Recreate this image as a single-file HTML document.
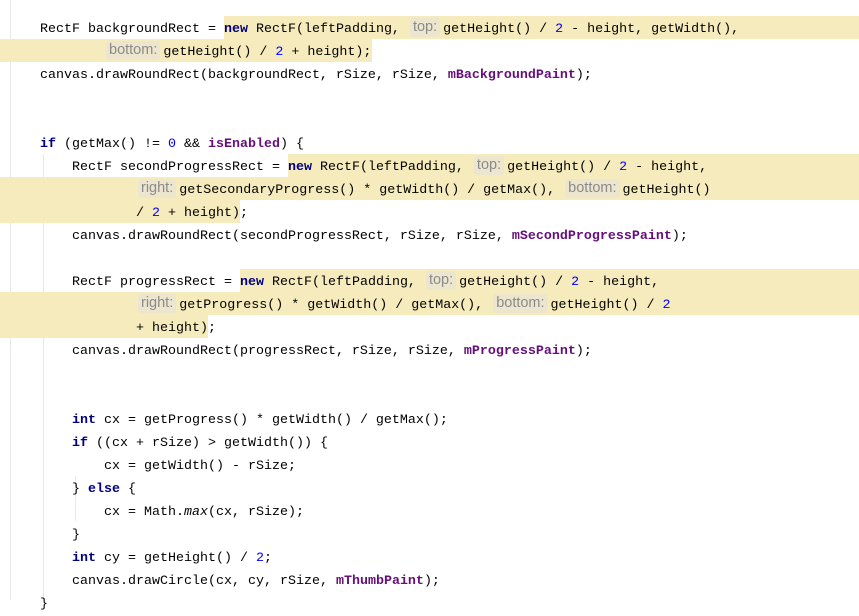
<!DOCTYPE html>
<html><head><meta charset="utf-8"><style>
body{margin:0;width:859px;height:600px;overflow:hidden;background:#fff;position:relative;font-family:"Liberation Mono",monospace;font-size:13.33px;color:#000}
.l{position:absolute;left:0;height:23px;line-height:23px;white-space:pre;transform:translateY(2px)}
.hl{position:absolute;height:23px;background:#f6ebbc}
.k{color:#000080;font-weight:bold}
.n{color:#0000ff}
.f{color:#660e7a;font-weight:bold}
.i{font-style:italic}
.h{display:inline-block;font-family:"Liberation Sans",sans-serif;font-size:14.5px;color:#8a8a8a;background:#ede6cf;border-radius:3px;padding:0 3px;line-height:19px;margin:0 3px 0 2px;position:relative;top:-1px}
.g{position:absolute;width:1px;background:#e8e8e8}
</style></head><body>
<div class="g" style="left:10px;top:0;height:600px"></div>
<div class="hl" style="left:224px;width:635px;top:16px"></div>
<div class="hl" style="left:0;width:372px;top:39px"></div>
<div class="hl" style="left:288px;width:571px;top:154px"></div>
<div class="hl" style="left:0;width:859px;top:177px"></div>
<div class="hl" style="left:0;width:240px;top:200px"></div>
<div class="hl" style="left:240px;width:619px;top:269px"></div>
<div class="hl" style="left:0;width:859px;top:292px"></div>
<div class="hl" style="left:0;width:208px;top:315px"></div>
<div class="g" style="left:43px;top:154px;height:446px"></div>
<div class="g" style="left:75px;top:476px;height:22px"></div>
<div class="g" style="left:75px;top:499px;height:22px"></div>
<div class="g" style="left:43px;top:39px;height:23px"></div>

<div class="l" style="top:16px;left:40px">RectF backgroundRect = <span class="k">new</span> RectF(leftPadding, <span class="h">top:</span>getHeight() / <span class="n">2</span> - height, getWidth(),</div>
<div class="l" style="top:39px;left:104px"><span class="h">bottom:</span>getHeight() / <span class="n">2</span> + height);</div>
<div class="l" style="top:62px;left:40px">canvas.drawRoundRect(backgroundRect, rSize, rSize, <span class="f">mBackgroundPaint</span>);</div>
<div class="l" style="top:131px;left:40px"><span class="k">if</span> (getMax() != <span class="n">0</span> &amp;&amp; <span class="f">isEnabled</span>) {</div>
<div class="l" style="top:154px;left:72px">RectF secondProgressRect = <span class="k">new</span> RectF(leftPadding, <span class="h">top:</span>getHeight() / <span class="n">2</span> - height,</div>
<div class="l" style="top:177px;left:136px"><span class="h">right:</span>getSecondaryProgress() * getWidth() / getMax(), <span class="h">bottom:</span>getHeight()</div>
<div class="l" style="top:200px;left:136px">/ <span class="n">2</span> + height);</div>
<div class="l" style="top:223px;left:72px">canvas.drawRoundRect(secondProgressRect, rSize, rSize, <span class="f">mSecondProgressPaint</span>);</div>
<div class="l" style="top:269px;left:72px">RectF progressRect = <span class="k">new</span> RectF(leftPadding, <span class="h">top:</span>getHeight() / <span class="n">2</span> - height,</div>
<div class="l" style="top:292px;left:136px"><span class="h">right:</span>getProgress() * getWidth() / getMax(), <span class="h">bottom:</span>getHeight() / <span class="n">2</span></div>
<div class="l" style="top:315px;left:136px">+ height);</div>
<div class="l" style="top:338px;left:72px">canvas.drawRoundRect(progressRect, rSize, rSize, <span class="f">mProgressPaint</span>);</div>
<div class="l" style="top:407px;left:72px"><span class="k">int</span> cx = getProgress() * getWidth() / getMax();</div>
<div class="l" style="top:430px;left:72px"><span class="k">if</span> ((cx + rSize) &gt; getWidth()) {</div>
<div class="l" style="top:453px;left:104px">cx = getWidth() - rSize;</div>
<div class="l" style="top:476px;left:72px">} <span class="k">else</span> {</div>
<div class="l" style="top:499px;left:104px">cx = Math.<span class="i">max</span>(cx, rSize);</div>
<div class="l" style="top:522px;left:72px">}</div>
<div class="l" style="top:545px;left:72px"><span class="k">int</span> cy = getHeight() / <span class="n">2</span>;</div>
<div class="l" style="top:568px;left:72px">canvas.drawCircle(cx, cy, rSize, <span class="f">mThumbPaint</span>);</div>
<div class="l" style="top:591px;left:40px">}</div>
</body></html>
